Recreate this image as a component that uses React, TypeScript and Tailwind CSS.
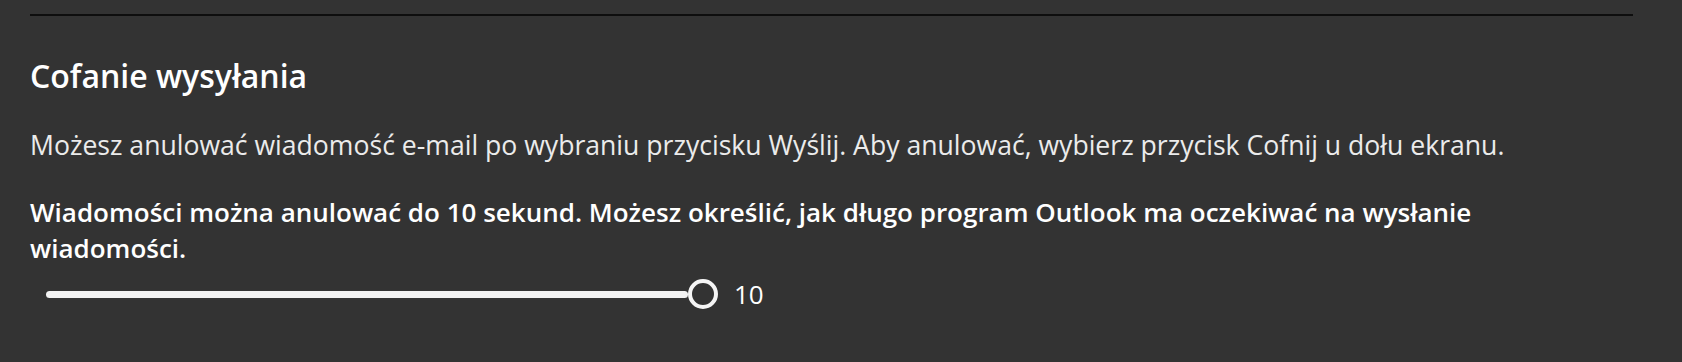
import React from "react";

export default function App() {
  return (
    <div
      className="w-[1682px] h-[362px] bg-[#333333] pl-[30px] pt-[14px] overflow-hidden"
      style={{ fontFamily: '"Open Sans", "Noto Sans", sans-serif' }}
    >
      <div className="w-[1603px] h-[2px] bg-[#0e0e0e]" />
      <h2 className="mt-[40px] text-[32px] leading-[40px] font-semibold text-white">
        Cofanie wysyłania
      </h2>
      <p className="mt-[33px] text-[26.6px] leading-[32px] text-[#ebebeb] whitespace-nowrap">
        Możesz anulować wiadomość e-mail po wybraniu przycisku Wyślij. Aby anulować, wybierz przycisk Cofnij u dołu ekranu.
      </p>
      <p className="mt-[33px] text-[26px] leading-[36px] font-semibold text-white whitespace-nowrap">
        Wiadomości można anulować do 10 sekund. Możesz określić, jak długo program Outlook ma oczekiwać na wysłanie
        <br />
        wiadomości.
      </p>
      <div className="mt-[13px] flex items-center h-[30px] pl-[16px]">
        <div className="w-[642px] h-[7px] rounded-full bg-[#f2f2f2]" />
        <div className="w-[30px] h-[30px] rounded-full border-[4px] border-[#f5f5f5] bg-[#333333]" />
        <span className="ml-[16px] text-[26px] leading-[30px] font-medium text-white">10</span>
      </div>
    </div>
  );
}
